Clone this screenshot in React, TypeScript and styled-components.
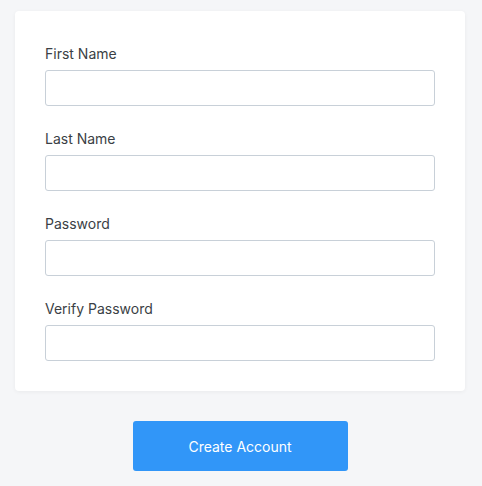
import React from "react";
import styled, { createGlobalStyle } from "styled-components";

const Global = createGlobalStyle`
  html, body { margin: 0; padding: 0; background: #f5f6f8; }
  body { font-family: Inter, "Noto Sans", sans-serif; }
  * { box-sizing: border-box; }
`;

const Page = styled.div`
  padding: 11px 17px 15px 15px;
  display: flex;
  flex-direction: column;
  align-items: center;
  gap: 30px;
`;

const Card = styled.form`
  align-self: stretch;
  background: #fff;
  border-radius: 4px;
  box-shadow: 0 1px 4px rgba(0, 0, 0, 0.05);
  padding: 33px 30px 30px;
  display: flex;
  flex-direction: column;
  gap: 23px;
`;

const Field = styled.div`
  display: flex;
  flex-direction: column;
  gap: 6px;
`;

const Label = styled.label`
  font-size: 14px;
  line-height: 20px;
  color: #3b3f45;
`;

const Input = styled.input`
  height: 36px;
  width: 100%;
  border: 1px solid #c8d0d8;
  border-radius: 3px;
  background: #fff;
  padding: 0 10px;
  font: inherit;
  font-size: 14px;
  outline: none;
`;

const Button = styled.button`
  width: 215px;
  height: 50px;
  border: none;
  border-radius: 3px;
  background: #3196f8;
  color: #fff;
  font-family: Inter, "Noto Sans", sans-serif;
  font-size: 14px;
  cursor: pointer;
`;

const fields = [
  { id: "first", label: "First Name", type: "text" },
  { id: "last", label: "Last Name", type: "text" },
  { id: "pw", label: "Password", type: "password" },
  { id: "pw2", label: "Verify Password", type: "password" },
];

export default function App() {
  return (
    <>
      <Global />
      <Page>
        <Card>
          {fields.map((f) => (
            <Field key={f.id}>
              <Label htmlFor={f.id}>{f.label}</Label>
              <Input id={f.id} type={f.type} />
            </Field>
          ))}
        </Card>
        <Button type="button">Create Account</Button>
      </Page>
    </>
  );
}
